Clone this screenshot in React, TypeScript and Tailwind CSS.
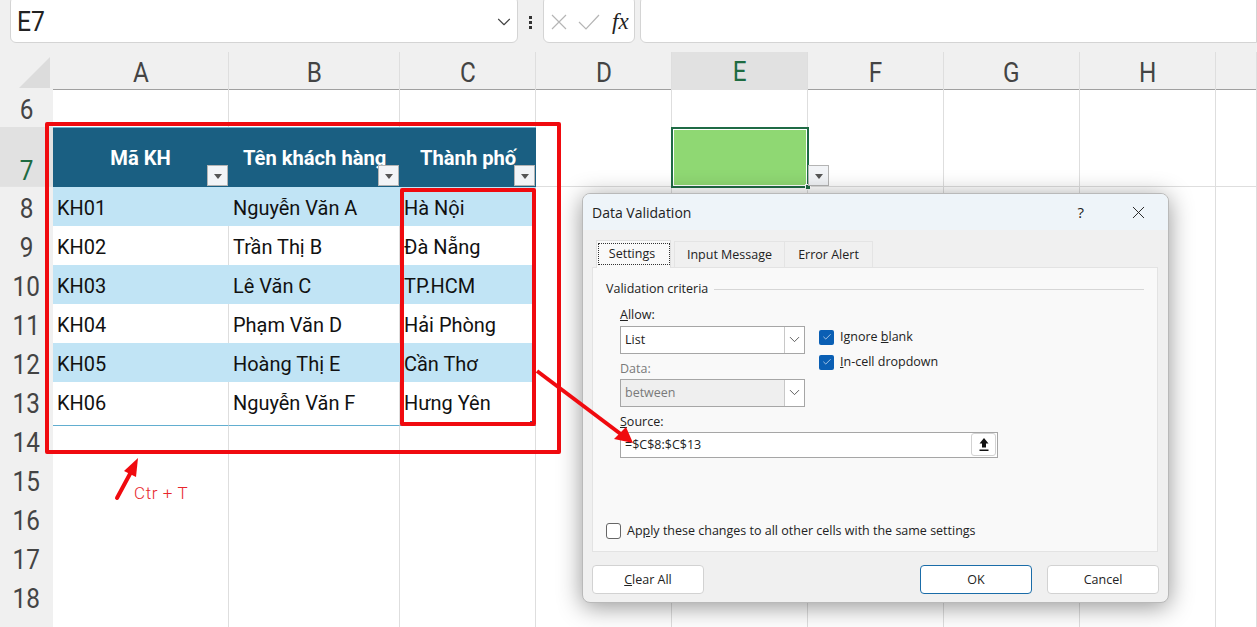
import { Check, ChevronDown, X } from 'lucide-react'

const cols = ['A', 'B', 'C', 'D', 'E', 'F', 'G', 'H', '']
const rowHeights: [number, number][] = [
  [6, 37], [7, 60], [8, 39], [9, 39], [10, 39], [11, 39], [12, 39], [13, 39],
  [14, 39], [15, 39], [16, 39], [17, 39], [18, 39], [19, 39],
]

const tableRows: Record<number, string[]> = {
  8: ['KH01', 'Nguyễn Văn A', 'Hà Nội'],
  9: ['KH02', 'Trần Thị B', 'Đà Nẵng'],
  10: ['KH03', 'Lê Văn C', 'TP.HCM'],
  11: ['KH04', 'Phạm Văn D', 'Hải Phòng'],
  12: ['KH05', 'Hoàng Thị E', 'Cần Thơ'],
  13: ['KH06', 'Nguyễn Văn F', 'Hưng Yên'],
}
const headers = ['Mã KH', 'Tên khách hàng', 'Thành phố']

function FilterButton({ className = '' }: { className?: string }) {
  return (
    <span className={`absolute flex h-[21px] w-[21px] items-center justify-center border border-[#b4b4b4] bg-[#f2f4f7] ${className}`}>
      <span className="mt-[1px] h-0 w-0 border-x-[4px] border-t-[5px] border-x-transparent border-t-[#555]" />
    </span>
  )
}

function RowNumber({ n, active }: { n: number; active: boolean }) {
  if (n === 19) return <div className="border-b border-[#e3e3e3] bg-[#f0f0f0]" />
  return (
    <div className={`flex justify-center border-b border-[#e3e3e3] text-[27px] ${active ? 'items-end bg-[#e1e1e1] leading-[30px] text-[#1e6b41]' : `items-center bg-[#f0f0f0] text-[#444] ${n > 6 ? 'pt-[2px]' : ''}`}`}>
      <span className="inline-block scale-x-[0.9]">{n}</span>
    </div>
  )
}

function Cell({ row, col }: { row: number; col: number }) {
  const data = tableRows[row]
  if (row === 7 && col < 3) {
    return (
      <div className="relative flex items-center justify-center border-t border-[#6aaed0] bg-[#1a5f82] pt-[3px] text-[21px] font-bold text-white">
        <span className="inline-block scale-x-[0.96] whitespace-nowrap">{headers[col]}</span>
        <FilterButton className="right-[1px] bottom-[1px]" />
      </div>
    )
  }
  if (data && col < 3) {
    const band = row % 2 === 0
    return (
      <div className={`relative flex items-center border-b border-[#62aed0] pt-[1px] pl-[4px] text-[21px] text-[#111] ${band ? 'bg-[#c1e4f5]' : `bg-white ${col < 2 ? 'border-r border-r-[#dedede]' : ''}`}`}>
        <span className="inline-block origin-left scale-x-[0.95] whitespace-nowrap">{data[col]}</span>
        {row === 13 && col === 2 && <span className="absolute right-[2px] bottom-0 h-[4px] w-[4px] bg-[#3f4f8f]" />}
      </div>
    )
  }
  if (row === 7 && col === 4) {
    return (
      <div className="relative -mr-px -mb-px -ml-px border-2 border-[#1f6b45] bg-[#8fd873] outline outline-1 -outline-offset-3 outline-white">
        <span className="absolute right-[-4px] bottom-[-4px] z-10 h-[6px] w-[6px] border border-white bg-[#1f6b45]" />
        <FilterButton className="right-[-22px] bottom-[0px] z-10 bg-[#f0f0f0]" />
      </div>
    )
  }
  return <div className="border-r border-b border-[#dedede] bg-white" />
}

function DialogSelect({ value, disabled = false }: { value: string; disabled?: boolean }) {
  return (
    <div className={`flex h-[28px] w-[185px] items-center justify-between border border-[#a6a6a6] pl-[4px] ${disabled ? 'bg-[#efefef] text-[#7a7a7a]' : 'bg-white text-[#222]'}`}>
      <span className="pt-[2px]">{value}</span>
      <span className="flex h-[26px] w-[20px] items-center justify-center border-l border-[#c8c8c8] bg-white">
        <ChevronDown size={17} strokeWidth={1.2} color="#444" />
      </span>
    </div>
  )
}

function DialogCheck({ children }: { children: React.ReactNode }) {
  return (
    <div className="flex h-[25px] items-center gap-[6px]">
      <span className="flex h-[15px] w-[15px] items-center justify-center rounded-[2px] bg-[#0a5fb4]">
        <Check size={10} strokeWidth={1.5} color="white" />
      </span>
      <span className="pt-[1px]">{children}</span>
    </div>
  )
}

function DialogButton({ children, primary = false }: { children: React.ReactNode; primary?: boolean }) {
  return (
    <div className={`flex h-[29px] w-[112px] items-center justify-center rounded-[4px] border bg-white pt-[2px] ${primary ? 'border-[#1a6ca8]' : 'border-[#d2d2d2]'}`}>
      {children}
    </div>
  )
}

function DataValidationDialog() {
  return (
    <div className="absolute top-[193px] left-[582px] z-20 h-[410px] w-[587px] overflow-hidden rounded-[8px] border border-[#b9b9b9] bg-[#f0f0f0] font-['Open_Sans',sans-serif] text-[12.5px] text-[#222] shadow-[0_4px_24px_rgba(0,0,0,0.42)]">
      <div className="flex h-[36px] items-center justify-between bg-[#eef4f9] pr-[19px] pl-[9px] text-[14px]">
        <span>Data Validation</span>
        <div className="flex items-center gap-[44px]">
          <span className="text-[15px]">?</span>
          <X size={21} strokeWidth={1.1} color="#222" />
        </div>
      </div>
      <div className="flex h-[37px] items-end pl-[13px]">
        <div className="relative z-10 mb-[-1px] flex h-[28px] w-[75px] items-start justify-center border border-b-0 border-[#e0e0e0] bg-[#f9f9f9] pt-[2px]">
          <span className="flex h-[22px] w-[72px] items-center justify-center border border-dotted border-[#333] pt-[1px] pr-[3px]">Settings</span>
        </div>
        <div className="ml-[3px] flex h-[26px] w-[111px] items-center justify-center border-x border-t border-[#e4e4e4] bg-[#f0f0f0] pt-[2px]">Input Message</div>
        <div className="flex h-[26px] w-[88px] items-center justify-center border-t border-r border-[#e4e4e4] bg-[#f0f0f0] pt-[2px]">Error Alert</div>
      </div>
      <div className="mx-[9px] h-[285px] w-[566px] border border-[#e3e3e3] bg-[#f9f9f9] px-[13px] pt-[12px]">
        <div className="flex items-center gap-[6px]">
          <span>Validation criteria</span>
          <span className="h-px flex-1 bg-[#d6d6d6]" />
        </div>
        <div className="mt-[7px] flex gap-[14px] pl-[14px]">
          <div className="w-[185px]">
            <div className="mb-[2px] leading-[18px]"><span className="underline">A</span>llow:</div>
            <DialogSelect value="List" />
            <div className="mt-[6px] mb-[1px] leading-[18px] text-[#7a7a7a]">Data:</div>
            <DialogSelect value="between" disabled />
          </div>
          <div className="pt-[19px]">
            <DialogCheck>Ignore <span className="underline">b</span>lank</DialogCheck>
            <DialogCheck><span className="underline">I</span>n-cell dropdown</DialogCheck>
          </div>
        </div>
        <div className="mt-[6px] ml-[14px] leading-[18px]"><span className="underline">S</span>ource:</div>
        <div className="mt-[1px] ml-[14px] flex h-[26px] w-[378px] items-center justify-between border border-[#a6a6a6] bg-white pr-[1px] pl-[4px]">
          <span className="pt-[2px]">=$C$8:$C$13</span>
          <span className="flex h-[23px] w-[25px] items-center justify-center rounded-[3px] border border-[#d2d2d2] bg-white">
            <svg width="12" height="15" viewBox="0 0 12 15">
              <path d="M6 1 L10.5 6.5 H8 V10.5 H4 V6.5 H1.5 Z M1.5 12.5 H10.5 V14 H1.5 Z" fill="#111" />
            </svg>
          </span>
        </div>
        <div className="mt-[64px] flex items-center gap-[6px]">
          <span className="h-[16px] w-[15px] rounded-[3px] border border-[#666] bg-white" />
          <span>Ap<span className="underline">p</span>ly these changes to all other cells with the same settings</span>
        </div>
      </div>
      <div className="mt-[13px] flex px-[9px]">
        <DialogButton><span><span className="underline">C</span>lear All</span></DialogButton>
        <div className="ml-auto flex gap-[15px]">
          <DialogButton primary>OK</DialogButton>
          <DialogButton>Cancel</DialogButton>
        </div>
      </div>
    </div>
  )
}

export default function App() {
  return (
    <div className="relative h-[627px] w-[1257px] overflow-hidden bg-[#f0f0f0] font-['Roboto',sans-serif]">
      {/* formula bar */}
      <div className="flex h-[52px] items-start">
        <div className="mt-[-4px] ml-[10px] flex h-[47px] w-[508px] items-center justify-between rounded-[6px] border border-[#d4d4d4] bg-white pt-[4px] pr-[2px] pl-[6px] text-[28px] text-[#222]">
          <span className="inline-block origin-left scale-x-[0.88]">E7</span>
          <ChevronDown size={22} strokeWidth={1.2} color="#444" />
        </div>
        <div className="flex h-[44px] w-[25px] items-center justify-center text-[#333]">
          <svg width="3" height="14" viewBox="0 0 3 14" fill="#333"><rect y="1" width="3" height="3" /><rect y="6" width="3" height="3" /><rect y="11" width="3" height="3" /></svg>
        </div>
        <div className="mt-[-4px] flex h-[47px] w-[92px] items-center gap-[11px] rounded-[6px] border border-[#d4d4d4] bg-white pt-[4px] pl-[7px]">
          <svg width="16" height="16" viewBox="0 0 16 16" fill="none" stroke="#b5b5b5" strokeWidth="1.2"><path d="M1 1 L15 15 M15 1 L1 15" /></svg>
          <svg width="22" height="16" viewBox="0 0 22 16" fill="none" stroke="#b5b5b5" strokeWidth="1.2"><path d="M1 8 L8 15 L21 1" /></svg>
          <span className="ml-[1px] font-['Liberation_Serif',serif] text-[23px] italic leading-none text-[#222]">fx</span>
        </div>
        <div className="mt-[-4px] ml-[5px] h-[47px] flex-1 rounded-l-[6px] border border-[#d4d4d4] bg-white" />
      </div>

      {/* column headers */}
      <div className="grid h-[38px] grid-cols-[53px_176px_171px_136px_136px_136px_136px_136px_136px_41px] border-b border-[#a0a0a0]">
        <div className="relative bg-[#f0f0f0]">
          <svg className="absolute top-[5px] left-[19px]" width="31" height="31" viewBox="0 0 31 31"><path d="M31 0 V31 H0 Z" fill="#dcdcdc" /></svg>
        </div>
        {cols.map((c) => (
          <div
            key={c || 'end'}
            className={`flex items-center justify-center border-r border-[#dedede] text-[27px] ${c === 'E' ? 'mb-[-1px] border-b-2 border-b-[#1e6b41] bg-[#e1e1e1] text-[#1e6b41]' : 'text-[#444]'}`}
          >
            <span className="inline-block scale-x-[0.9]">{c}</span>
          </div>
        ))}
      </div>

      {/* sheet */}
      <div className="grid grid-cols-[53px_176px_171px_136px_136px_136px_136px_136px_136px_41px]">
        {rowHeights.map(([n, h]) => (
          <div key={n} className="col-span-10 grid grid-cols-subgrid" style={{ height: h }}>
            <RowNumber n={n} active={n === 7} />
            {cols.map((c, i) => <Cell key={c || 'end'} row={n} col={i} />)}
          </div>
        ))}
      </div>

      {/* annotations */}
      <div className="absolute top-[122px] left-[45px] h-[332px] w-[516px] rounded-[2px] border-[4px] border-[#f00a0f]" />
      <div className="absolute top-[188px] left-[400px] h-[238px] w-[136px] rounded-[2px] border-[4px] border-[#f00a0f]" />
      <span className="absolute top-[481px] left-[134px] text-[17px] font-light tracking-[0.6px] text-[#e8262c]">Ctr + T</span>
      <DataValidationDialog />
      <svg className="absolute top-0 left-0 z-30" width="1257" height="627" viewBox="0 0 1257 627">
        <path d="M537 371 L622 435" stroke="#f00a0f" strokeWidth="4" fill="none" />
        <path d="M633 443 L614 439 L626 427 Z" fill="#f00a0f" />
        <path d="M117 498 L131 472" stroke="#f00a0f" strokeWidth="4" strokeLinecap="round" fill="none" />
        <path d="M138 458 L136 477 L124 471 Z" fill="#f00a0f" />
      </svg>
    </div>
  )
}
